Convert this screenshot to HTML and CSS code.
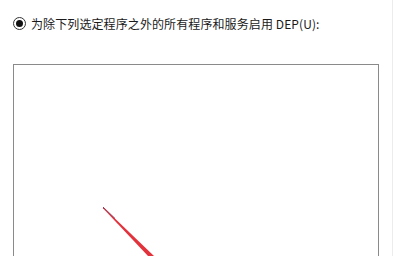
FILE: index.html
```html
<!DOCTYPE html>
<html lang="zh-CN">
<head>
    <meta charset="UTF-8">
    <title>DEP</title>
    <link rel="stylesheet" href="styles.css">
</head>
<body>
    <div class="panel">
        <label class="option">
            <span class="radio"><span class="dot"></span></span>
            <span class="label-text">为除下列选定程序之外的所有程序和服务启用 DEP(U):</span>
        </label>
        <div class="list-box"></div>
    </div>

    <svg class="arrow" width="60" height="52" viewBox="0 0 60 52">
        <polygon points="0,0 51,49 45,49 -0.5,0.8" fill="#e2323c"/>
        <line x1="0" y1="0" x2="12" y2="11.5" stroke="#8a4060" stroke-width="1"/>
    </svg>
</body>
</html>
```

FILE: styles.css
```css
body {
    margin: 0;
    background-color: white;
    font-family: "Microsoft YaHei", "Noto Sans CJK SC", "Noto Sans", sans-serif;
    overflow: hidden;
}
.panel {
    width: 393px;
    height: 256px;
    border-right: 1px solid #ececec;
    padding: 17px 0 0 13px;
    box-sizing: border-box;
}
.option {
    display: flex;
    align-items: center;
    gap: 5px;
    height: 13px;
}
.radio {
    width: 11px;
    height: 11px;
    border: 1px solid #333;
    border-radius: 50%;
    display: flex;
    align-items: center;
    justify-content: center;
}
.dot {
    width: 7px;
    height: 7px;
    border-radius: 50%;
    background-color: #111;
}
.label-text {
    font-size: 12px;
    letter-spacing: 0.1px;
    color: #1a1a1a;
    white-space: nowrap;
}
.list-box {
    margin-top: 34px;
    width: 366px;
    height: 200px;
    border: 1px solid #8a8a8a;
    box-sizing: border-box;
}
.arrow {
    position: absolute;
    left: 103px;
    top: 207px;
}
```
